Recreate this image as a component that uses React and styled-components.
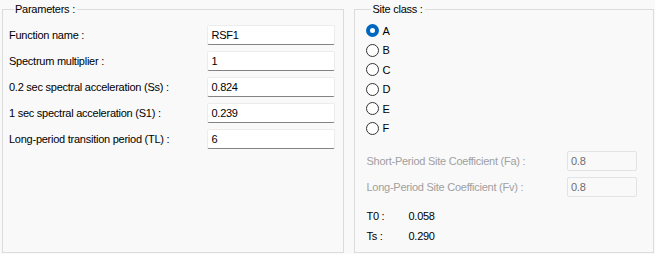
import React from "react";
import styled, { createGlobalStyle } from "styled-components";

const GlobalStyle = createGlobalStyle`
  html, body {
    margin: 0;
    padding: 0;
    background: #f9f9f9;
  }
  body {
    font-family: "Liberation Sans", Arial, sans-serif;
    font-size: 11px;
    letter-spacing: -0.25px;
    color: #000;
  }
`;

const parameters = [
  { label: "Function name :", value: "RSF1" },
  { label: "Spectrum multiplier :", value: "1" },
  { label: "0.2 sec spectral acceleration (Ss) :", value: "0.824" },
  { label: "1 sec spectral acceleration (S1) :", value: "0.239" },
  { label: "Long-period transition period (TL) :", value: "6" },
];

const siteClasses = ["A", "B", "C", "D", "E", "F"];

const Page = styled.div`
  display: flex;
  gap: 10px;
  width: 655px;
  height: 254px;
  padding: 1px 1px 1px 2px;
  box-sizing: border-box;
`;

const Group = styled.fieldset`
  margin: 0;
  padding: ${(p) => p.$pad};
  width: ${(p) => p.$width}px;
  box-sizing: border-box;
  border: 1px solid #dcdcdc;
  display: flex;
  flex-direction: column;
  min-width: 0;
`;

const Title = styled.legend`
  padding: 0 2px 0 1px;
  margin-left: 5px;
  line-height: 16px;
  font-size: 11px;
`;

const ParamRow = styled.div`
  display: flex;
  align-items: center;
  justify-content: space-between;
  height: 20px;
  margin-bottom: ${(p) => (p.$tight ? 0 : 6)}px;
`;

const Label = styled.span`
  color: ${(p) => (p.$disabled ? "#a0a0a0" : "#000")};
  white-space: nowrap;
`;

const TextBox = styled.div`
  width: ${(p) => p.$width}px;
  height: 20px;
  box-sizing: border-box;
  background: ${(p) => (p.$disabled ? "#f9f9f9" : "#fff")};
  border: 1px solid ${(p) => (p.$disabled ? "#e3e3e3" : "#ececec")};
  border-bottom-color: ${(p) => (p.$disabled ? "#e3e3e3" : "#838383")};
  border-radius: 2px;
  padding: 0 3px;
  display: flex;
  align-items: center;
  color: ${(p) => (p.$disabled ? "#6d6d6d" : "#000")};
`;

const RadioList = styled.div`
  display: flex;
  flex-direction: column;
  gap: 6.5px;
  margin-top: -1px;
`;

const RadioRow = styled.label`
  display: flex;
  align-items: center;
  gap: 3px;
  height: 13px;
`;

const RadioDot = styled.span`
  width: 13px;
  height: 13px;
  box-sizing: border-box;
  border-radius: 50%;
  flex: none;
  background: #fff;
  border: ${(p) => (p.$checked ? "4px solid #0067c0" : "1px solid #333")};
`;

const CoefBlock = styled.div`
  display: flex;
  flex-direction: column;
  gap: 6px;
  margin-top: 16px;
`;

const ResultBlock = styled.div`
  display: flex;
  flex-direction: column;
  gap: 6px;
  margin-top: 12px;
`;

const ResultRow = styled.div`
  display: grid;
  grid-template-columns: 42px auto;
  height: 14px;
  align-items: center;
`;

export default function App() {
  return (
    <>
      <GlobalStyle />
      <Page>
        <Group $width={343} $pad="8px 8px 0 6px">
          <Title>Parameters :</Title>
          {parameters.map((p) => (
            <ParamRow key={p.label}>
              <Label>{p.label}</Label>
              <TextBox $width={128}>{p.value}</TextBox>
            </ParamRow>
          ))}
        </Group>
        <Group $width={300} $pad="8px 16px 0 11px">
          <Title>Site class :</Title>
          <RadioList>
            {siteClasses.map((c) => (
              <RadioRow key={c}>
                <RadioDot $checked={c === "A"} />
                {c}
              </RadioRow>
            ))}
          </RadioList>
          <CoefBlock>
            <ParamRow $tight>
              <Label $disabled>Short-Period Site Coefficient (Fa) :</Label>
              <TextBox $width={70} $disabled>0.8</TextBox>
            </ParamRow>
            <ParamRow $tight>
              <Label $disabled>Long-Period Site Coefficient (Fv) :</Label>
              <TextBox $width={70} $disabled>0.8</TextBox>
            </ParamRow>
          </CoefBlock>
          <ResultBlock>
            <ResultRow>
              <span>T0 :</span>
              <span>0.058</span>
            </ResultRow>
            <ResultRow>
              <span>Ts :</span>
              <span>0.290</span>
            </ResultRow>
          </ResultBlock>
        </Group>
      </Page>
    </>
  );
}
